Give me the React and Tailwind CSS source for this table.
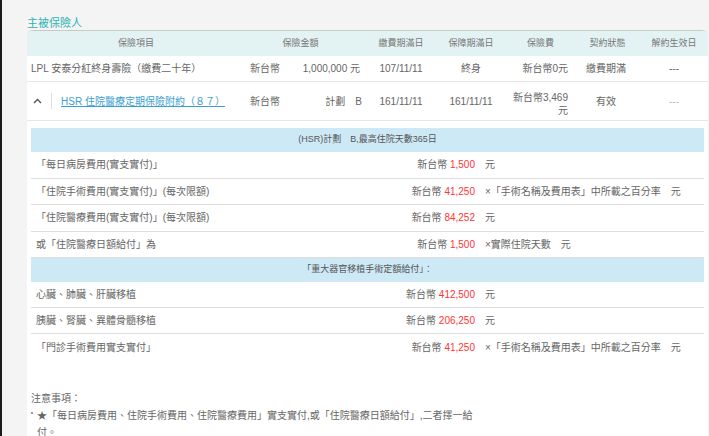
import React from "react";

const FONT = { fontFamily: '"Liberation Sans", "Noto Sans CJK TC", sans-serif' };

function DetailRow({ label, amount, suffix, last }) {
  return (
    <div
      className={`grid grid-cols-[444px_1fr] h-[26.5px] items-center text-[10px] text-[#666] ${
        last ? "" : "border-b border-[#dedede]"
      }`}
    >
      <div className="flex justify-between pl-[5px]">
        <span>{label}</span>
        <span>
          新台幣 <span className="text-[#f33]">{amount}</span>
        </span>
      </div>
      <div className="pl-[10px] whitespace-pre">{suffix}</div>
    </div>
  );
}

function BlueHead({ children }) {
  return (
    <div className="h-[24px] bg-[#cde9f6] flex items-center justify-center text-[9px] text-[#555] whitespace-pre">
      {children}
    </div>
  );
}

export default function App() {
  const cols = "grid grid-cols-[218px_121px_70px_70px_69px_65px_68px]";
  return (
    <div className="flex h-[436px] w-[709px] overflow-hidden bg-[#f4f4f4]" style={FONT}>
      <div className="w-[2px] shrink-0 bg-[#1b1b1b]" />
      <div className="flex-1 pl-[25px]">
        <div className="h-[30px] pt-[16px] text-[11px] leading-[14px] text-[#2bb3b3]">主被保險人</div>
        <div className="w-[681px] h-[420px] bg-white rounded-t-[6px] border-t-[1.5px] border-[#c9c9c9]">
          {/* header */}
          <div className={`${cols} h-[25px] items-center bg-[#e3f2f2] rounded-t-[5px] text-[9px] text-[#777] text-center`}>
            <div>保險項目</div>
            <div className="pr-[10px]">保險金額</div>
            <div>繳費期滿日</div>
            <div>保障期滿日</div>
            <div>保險費</div>
            <div>契約狀態</div>
            <div>解約生效日</div>
          </div>
          {/* row 1 */}
          <div className={`${cols} h-[26px] items-center border-b border-[#e6e6e6] text-[10px] text-[#666]`}>
            <div className="pl-[4px] whitespace-nowrap">LPL 安泰分紅終身壽險（繳費二十年）</div>
            <div className="flex justify-between pl-[5px] pr-[6px]">
              <span>新台幣</span>
              <span>1,000,000 元</span>
            </div>
            <div className="text-center">107/11/11</div>
            <div className="text-center">終身</div>
            <div className="text-right pr-[7px]">新台幣0元</div>
            <div className="text-center pr-[3px]">繳費期滿</div>
            <div className="text-center">---</div>
          </div>
          {/* row 2 */}
          <div className={`${cols} h-[39px] items-center border-b border-[#e6e6e6] text-[10px] text-[#666]`}>
            <div className="flex items-center pl-[6px]">
              <svg width="9" height="6" viewBox="0 0 9 6" className="ml-[0px]">
                <path d="M1 5 L4.5 1.5 L8 5" fill="none" stroke="#555" strokeWidth="1.4" />
              </svg>
              <div className="ml-[9px] w-px h-[16px] bg-[#ddd]" />
              <a className="ml-[9px] text-[#3aa0d0] underline whitespace-nowrap">HSR 住院醫療定期保險附約（８７）</a>
            </div>
            <div className="flex justify-between pl-[5px] pr-[4px]">
              <span>新台幣</span>
              <span className="whitespace-pre">計劃　B</span>
            </div>
            <div className="text-center">161/11/11</div>
            <div className="text-center">161/11/11</div>
            <div className="text-right pr-[7px] leading-[13px] pt-[5px]">
              新台幣3,469
              <br />元
            </div>
            <div className="text-center pr-[3px]">有效</div>
            <div className="text-center text-[#bbb]">---</div>
          </div>
          {/* detail block */}
          <div className="mt-[7px] mx-[4px]">
            <BlueHead>(HSR)計劃　B,最高住院天數365日</BlueHead>
            <DetailRow label="「每日病房費用(實支實付)」" amount="1,500" suffix="元" />
            <DetailRow
              label="「住院手術費用(實支實付)」(每次限額)"
              amount="41,250"
              suffix="×「手術名稱及費用表」中所載之百分率　元"
            />
            <DetailRow label="「住院醫療費用(實支實付)」(每次限額)" amount="84,252" suffix="元" />
            <DetailRow label="或「住院醫療日額給付」為" amount="1,500" suffix="×實際住院天數　元" />
            <BlueHead>「重大器官移植手術定額給付」：</BlueHead>
            <div className="h-[26px] border-b border-[#dedede] grid grid-cols-[444px_1fr] items-center text-[10px] text-[#666]">
              <div className="flex justify-between pl-[5px]">
                <span>心臟、肺臟、肝臟移植</span>
                <span>
                  新台幣 <span className="text-[#f33]">412,500</span>
                </span>
              </div>
              <div className="pl-[10px]">元</div>
            </div>
            <div className="h-[26px] border-b border-[#dedede] grid grid-cols-[444px_1fr] items-center text-[10px] text-[#666]">
              <div className="flex justify-between pl-[5px]">
                <span>胰臟、腎臟、異體骨髓移植</span>
                <span>
                  新台幣 <span className="text-[#f33]">206,250</span>
                </span>
              </div>
              <div className="pl-[10px]">元</div>
            </div>
            <div className="h-[26px] grid grid-cols-[444px_1fr] items-center text-[10px] text-[#666]">
              <div className="flex justify-between pl-[5px]">
                <span>「門診手術費用實支實付」</span>
                <span>
                  新台幣 <span className="text-[#f33]">41,250</span>
                </span>
              </div>
              <div className="pl-[10px] whitespace-pre">×「手術名稱及費用表」中所載之百分率　元</div>
            </div>
          </div>
          {/* notes */}
          <div className="pt-[30px] pl-[4px] text-[10px] leading-[17px] text-[#666]">
            <div>注意事項：</div>
            <div className="flex">
              <span className="w-[2px] h-[2px] bg-[#999] mt-[5px] shrink-0" />
              <div className="ml-[4px]">
                ★「每日病房費用、住院手術費用、住院醫療費用」實支實付,或「住院醫療日額給付」,二者擇一給
                <br />付。
              </div>
            </div>
          </div>
        </div>
      </div>
    </div>
  );
}
